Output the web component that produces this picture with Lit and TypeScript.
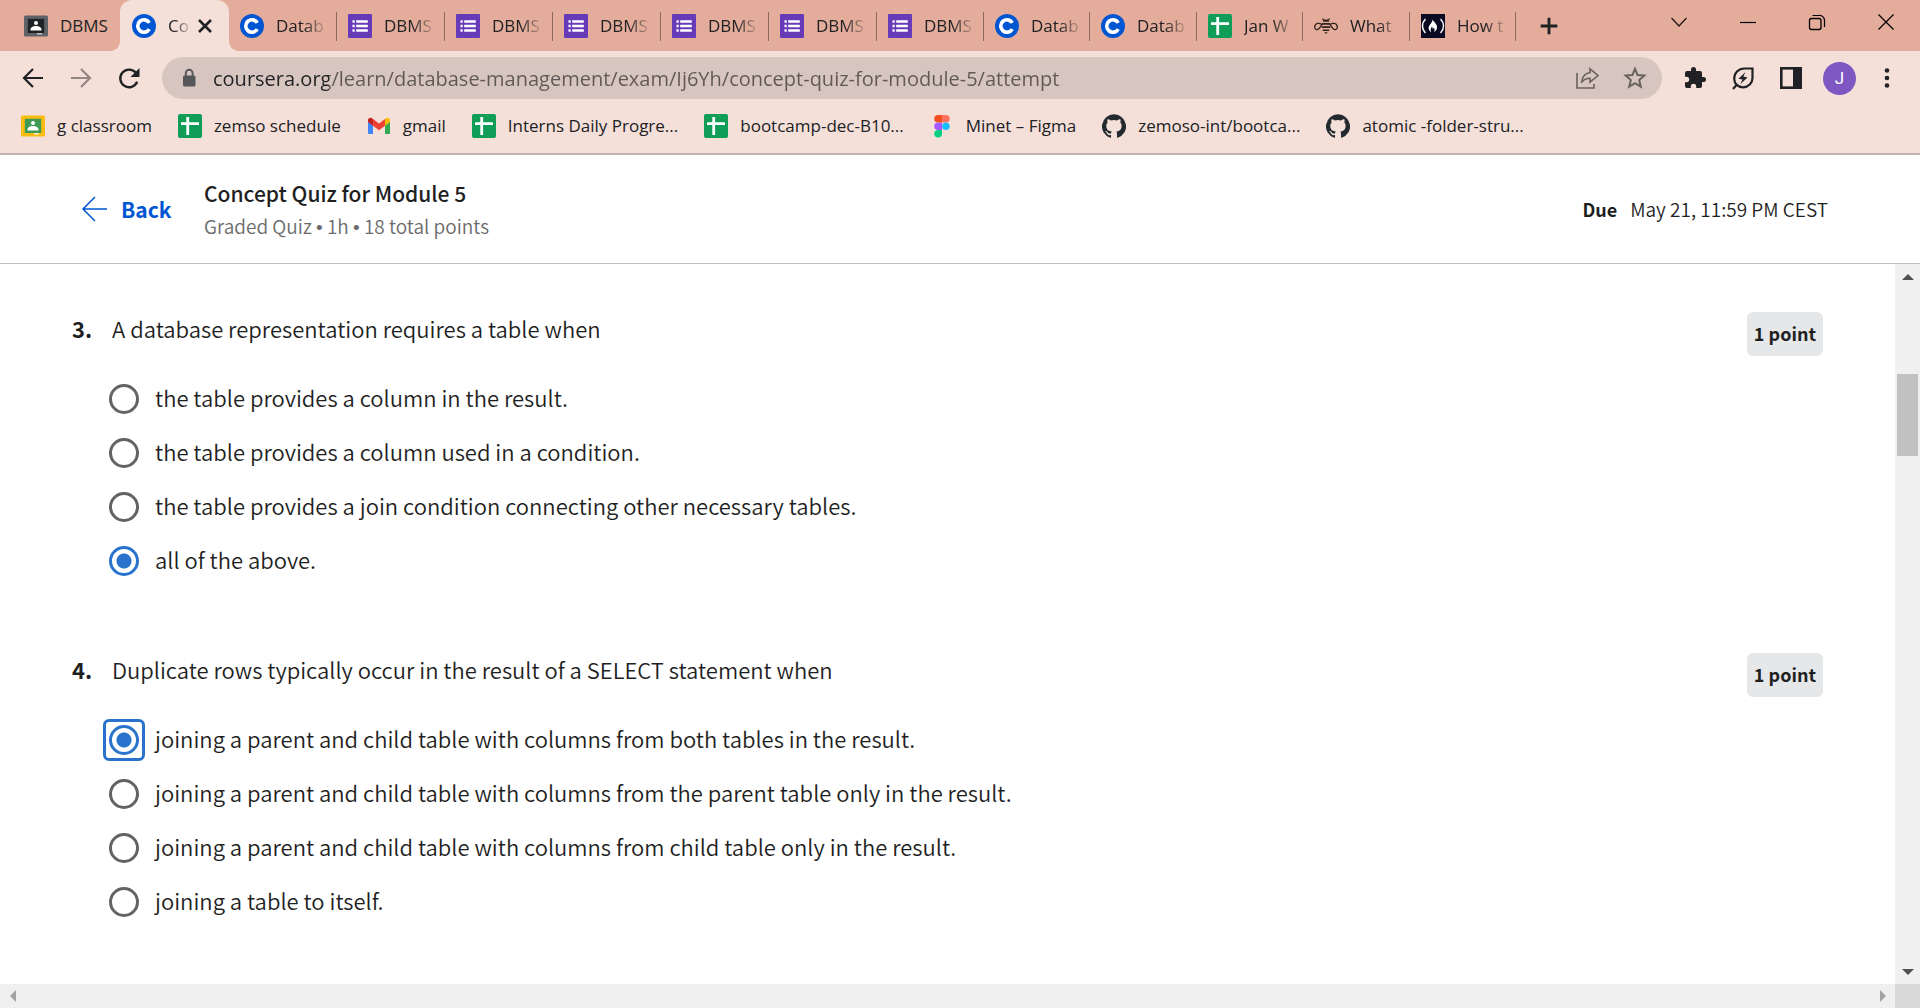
import { LitElement, html, css, svg, nothing, TemplateResult } from "lit";
import { customElement, property, state } from "lit/decorators.js";
import { classMap } from "lit/directives/class-map.js";

const shapes: Record<string, TemplateResult> = {
  classroomDark: svg`<rect y="1.500" width="24" height="21" rx="1.500" fill="#5f6368"/><rect x="3.800" y="4.800" width="16.400" height="14.200" fill="#202124"/><circle cx="12" cy="9" r="2" fill="#fff"/><path d="M6.500 15.500c0-2.400 2.600-3.600 5.500-3.600s5.500 1.200 5.500 3.600V16.500h-11z" fill="#fff"/><path d="M13 19h5v1.500h-5z" fill="#bdc1c6"/>`,
  classroom: svg`<rect y="1.500" width="24" height="21" rx="1.500" fill="#f9bd12"/><rect x="3.800" y="4.800" width="16.400" height="14.200" fill="#3f9a54"/><circle cx="12" cy="9" r="2" fill="#fff"/><path d="M6.500 15.500c0-2.400 2.600-3.600 5.500-3.600s5.500 1.200 5.500 3.600V16.500h-11z" fill="#fff"/><path d="M13 19h5v1.500h-5z" fill="#fff3c4"/>`,
  coursera: svg`<circle cx="12" cy="12" r="12" fill="#0056d2"/><path d="M17.300 8.900a6.200 6.200 0 1 0 0 6.200" fill="none" stroke="#fff" stroke-width="3.600"/>`,
  forms: svg`<rect width="24" height="24" rx="1" fill="#673ab7"/><path d="M4.500 6.200h2.200v2.600H4.500zM4.500 10.700h2.200v2.600H4.500zM4.500 15.200h2.200v2.600H4.500zM8.200 6.200h11.600v2.600H8.200zM8.200 10.700h11.600v2.600H8.200zM8.200 15.200h11.600v2.600H8.200z" fill="#fff"/>`,
  sheets: svg`<rect width="24" height="24" rx="2" fill="#0f9d58"/><path d="M8.300 3h2.800v5.300h9.900v2.800h-9.900V21H8.300v-9.900H3V8.300h5.300z" fill="#fff"/>`,
  bee: svg`<g fill="none" stroke="#33231f" stroke-width="1.300"><path d="M8 10.500C5 8.300 1.500 9.300.8 12c-.7 3 2.200 4.600 4 2.700C6.500 13 7 11.500 8 10.500zM16 10.500c3-2.200 6.500-1.200 7.200 1.500.7 3-2.200 4.600-4 2.700-1.700-1.700-2.200-3.200-3.200-4.200zM9.500 6l-1-1.500M14.500 6l1-1.500"/></g><path d="M9.500 5.500h5l.8 2.300H8.700zM8 9h8v1.800H8zM7.700 12.200h8.600V14H7.700zM8.700 15.400h6.600v1.700H8.700zM10.300 18.300h3.400L12 20z" fill="#33231f"/>`,
  fcc: svg`<rect width="24" height="24" fill="#0a0a23"/><g fill="none" stroke="#fff" stroke-width="1.400"><path d="M4.500 5c-4 4-4 10 0 14M19.500 5c4 4 4 10 0 14"/></g><path d="M11.500 5.500c1.200 2.500 5 4.500 4.500 8.300-.2 2-1.500 3.500-3 4.200 1-1.800.6-3.200-.3-4.400-.2 1-.7 1.300-1.200 1.300.1-1 0-1.700-.5-2.300-1.200 1.800-1.800 3.300-.7 5.400-2-.8-3-2.600-2.600-4.700.5-2.500 3.700-4.500 3.800-7.800z" fill="#fff"/>`,
  gmail: svg`<path d="M1 6v13c0 .6.500 1 1 1h4V11.500z" fill="#4285f4"/><path d="M18 20h4c.6 0 1-.4 1-1V6l-5 5.500z" fill="#34a853"/><path d="M18 5v6.700l5-3.700V6.200c0-2-2.200-3.100-3.800-2z" fill="#fbbc04"/><path d="M6 11.700V5l6 4.500L18 5v6.700l-6 4.500z" fill="#ea4335"/><path d="M1 6.200V8l5 3.700V5l-1.200-.8C3.200 3.100 1 4.200 1 6.200z" fill="#c5221f"/>`,
  figma: svg`<path d="M8 1h4v7.500H8A3.750 3.750 0 0 1 8 1z" fill="#f24e1e"/><path d="M12 1h4a3.750 3.750 0 0 1 0 7.500h-4z" fill="#ff7262"/><path d="M8 8.500h4V16H8a3.750 3.750 0 0 1 0-7.500z" fill="#a259ff"/><circle cx="15.900" cy="12.250" r="3.750" fill="#1abcfe"/><path d="M8 16h4v3.750A3.900 3.750 0 1 1 8 16z" fill="#0acf83"/>`,
  github: svg`<path fill="#24292f" d="M12 .3a12 12 0 0 0-3.800 23.400c.6.100.8-.3.800-.6v-2c-3.300.7-4-1.600-4-1.600-.6-1.400-1.400-1.800-1.400-1.800-1-.7.100-.7.100-.7 1.200 0 1.900 1.200 1.900 1.200 1 1.800 2.800 1.300 3.500 1 0-.8.400-1.300.7-1.600-2.700-.3-5.500-1.300-5.500-6 0-1.200.5-2.300 1.300-3.100-.2-.4-.6-1.600 0-3.200 0 0 1-.3 3.400 1.200a11.500 11.500 0 0 1 6 0c2.300-1.500 3.300-1.200 3.300-1.200.6 1.600.2 2.800 0 3.200.9.800 1.300 1.900 1.300 3.200 0 4.600-2.800 5.600-5.500 5.900.5.400.9 1 .9 2.200v3.300c0 .3.100.7.800.6A12 12 0 0 0 12 .3"/>`,
  closeTab: svg`<path d="M6 6l12 12M18 6l-12 12" stroke="#202124" stroke-width="2.600"/>`,
  plus: svg`<path d="M12 2v20M2 12h20" stroke="#202124" stroke-width="3.400"/>`,
  chevron: svg`<path d="M4.500 8l7.500 8 7.500-8" fill="none" stroke="#1b1513" stroke-width="1.200"/>`,
  minimise: svg`<path d="M4 12.500h16" stroke="#000" stroke-width="1.200"/>`,
  restore: svg`<path d="M7.500 5.500h6.500a5 5 0 0 1 5.500 5.500v6" fill="none" stroke="#000" stroke-width="1.200"/><rect x="4.500" y="8.500" width="11.500" height="11" rx="2" fill="none" stroke="#000" stroke-width="1.300"/>`,
  closeWindow: svg`<path d="M4.500 4.500l15 15M19.500 4.500l-15 15" stroke="#000" stroke-width="1.200"/>`,
  back: svg`<path d="M22 12H3.500M12 3l-9 9 9 9" fill="none" stroke="#202124" stroke-width="2.200"/>`,
  forward: svg`<path d="M2 12h18.500M12 3l9 9-9 9" fill="none" stroke="#948783" stroke-width="2.200"/>`,
  reload: svg`<path d="M20.200 15.800a8.800 8.800 0 1 1-1.300-9" fill="none" stroke="#202124" stroke-width="2.400"/><path d="M22.500 2v9h-9z" fill="#202124"/>`,
  lock: svg`<rect x="6" y="9.500" width="12.500" height="11" rx="1.500" fill="#54565a"/><path d="M8.800 10V7.200a3.400 3.400 0 0 1 6.800 0V10" fill="none" stroke="#54565a" stroke-width="1.900"/>`,
  share: svg`<path d="M2 7v15h17v-4" fill="none" stroke="#69625f" stroke-width="1.600"/><path d="M15 2.800l8 6.700-8 6.500v-3.800c-4 0-6.500 1.300-8.500 4.500.5-5.500 3.500-9.300 8.500-10.200z" fill="none" stroke="#69625f" stroke-width="1.600"/>`,
  star: svg`<path d="M12 2.800l2.600 6.300 6.700.5-5.100 4.400 1.600 6.700L12 17.100l-5.800 3.600L7.800 14 2.700 9.600l6.700-.5z" fill="none" stroke="#69625f" stroke-width="2"/>`,
  puzzle: svg`<path d="M20.500 11H19V7a2 2 0 0 0-2-2h-4V3.500a2.500 2.500 0 0 0-5 0V5H4a2 2 0 0 0-2 2v3.800h1.500a2.700 2.700 0 0 1 0 5.400H2V20a2 2 0 0 0 2 2h3.800v-1.500a2.700 2.700 0 0 1 5.400 0V22H17a2 2 0 0 0 2-2v-4h1.500a2.500 2.500 0 0 0 0-5z" fill="#202124"/>`,
  leaf: svg`<path d="M21.500 2.500V12a9.300 9.300 0 0 1-9.300 9.300c-5.200 0-9-3.700-9-8.600 0-5.600 4-10.200 10.300-10.200z" fill="none" stroke="#202124" stroke-width="2.200"/><path d="M2 23l4-4.500" stroke="#202124" stroke-width="2.200"/><path d="M14.500 6L7.500 12.700l4 .8-2.300 4.700 7.300-6.800-4.200-.8z" fill="#202124"/>`,
  panel: svg`<rect x="2.300" y="2.300" width="19.400" height="19.400" fill="none" stroke="#202124" stroke-width="2.600"/><path d="M14 2h8v20h-8z" fill="#202124"/>`,
  dots: svg`<circle cx="12" cy="4.500" r="2.300" fill="#202124"/><circle cx="12" cy="12" r="2.300" fill="#202124"/><circle cx="12" cy="19.500" r="2.300" fill="#202124"/>`,
  longArrow: svg`<path d="M25 12H1M13 0L1 12l12 12" fill="none" stroke="#0056d2" stroke-width="1.500"/>`,
};

const icon = (name: string) =>
  html`<svg class="icon" viewBox="0 0 24 24" aria-hidden="true">${shapes[name]}</svg>`;

const iconStyles = css`
  * { box-sizing: border-box; }
  .icon { display: block; width: 24px; height: 24px; flex: none; }
  button {
    border: 0; padding: 0; margin: 0; background: none; color: inherit;
    font: inherit; display: flex; align-items: center; justify-content: center;
  }
`;

interface Tab { icon: string; title: string; active?: boolean }

@customElement("browser-tabs")
class BrowserTabs extends LitElement {
  static styles = [iconStyles, css`
    :host { display: block; background: #e4ac9a; color: #202124; }
    .strip { display: flex; height: 51px; padding-left: 12px; }
    .tabs { display: flex; min-width: 0; }
    .tab {
      position: relative; display: flex; align-items: center; gap: 12px;
      width: 108px; padding: 0 4px 0 12px;
    }
    .tab:nth-child(n + 9) { width: 107px; }
    .tab:nth-child(2n + 10) { width: 106px; }
    .tab.split::after {
      content: ""; position: absolute; right: -1px; top: 12px; width: 1px; height: 29px;
      background: #8d6a5f;
    }
    .title {
      flex: 1; min-width: 0; white-space: nowrap; text-align: left;
      font-size: 17px; line-height: 24px;
      mask-image: linear-gradient(to right, #000 28px, transparent 52px);
    }
    .tab:first-child .title { mask-image: none; }
    .tab.active {
      background: #f5e0d9; border-radius: 12px 12px 0 0; width: 109px; margin-right: -1px;
      padding-right: 12px;
    }
    .tab.active::before, .tab.active::after {
      content: ""; position: absolute; bottom: 0; width: 10px; height: 10px;
    }
    .tab.active::before { left: -10px; background: radial-gradient(circle at 0 0, transparent 10px, #f5e0d9 10px); }
    .tab.active::after { right: -10px; background: radial-gradient(circle at 100% 0, transparent 10px, #f5e0d9 10px); }
    .tab.active .title { mask-image: linear-gradient(to right, #000 6px, transparent 24px); }
    .tab.active .close { margin-left: -12px; }
    .new { width: 68px; }
    .new .icon { width: 20px; height: 20px; }
    .window { display: flex; margin-left: auto; height: 44px; }
    .window button { width: 69px; }
  `];

  private tabs: Tab[] = [
    { icon: "classroomDark", title: "DBMS" },
    { icon: "coursera", title: "Co", active: true },
    { icon: "coursera", title: "Datab" },
    ...Array.from({ length: 6 }, () => ({ icon: "forms", title: "DBMS" })),
    { icon: "coursera", title: "Datab" },
    { icon: "coursera", title: "Datab" },
    { icon: "sheets", title: "Jan W" },
    { icon: "bee", title: "What" },
    { icon: "fcc", title: "How t" },
  ];

  render() {
    return html`
      <div class="strip">
        <div class="tabs" role="tablist">
          ${this.tabs.map((t, i) => html`
            <div class=${classMap({ tab: true, active: !!t.active, split: i > 1 })} role="tab" aria-selected=${!!t.active}>
              ${icon(t.icon)}<span class="title">${t.title}</span>
              ${t.active ? html`<button class="close" aria-label="Close tab">${icon("closeTab")}</button>` : nothing}
            </div>`)}
        </div>
        <button class="new" aria-label="New tab">${icon("plus")}</button>
        <div class="window">
          <button aria-label="Search tabs">${icon("chevron")}</button>
          <button aria-label="Minimise">${icon("minimise")}</button>
          <button aria-label="Restore">${icon("restore")}</button>
          <button aria-label="Close">${icon("closeWindow")}</button>
        </div>
      </div>`;
  }
}

@customElement("browser-toolbar")
class BrowserToolbar extends LitElement {
  static styles = [iconStyles, css`
    :host { display: block; background: #f5e0d9; color: #202124; border-bottom: 2px solid #c6b3ad; }
    .bar { display: flex; align-items: center; height: 54px; padding: 0 21px; }
    .nav { display: flex; gap: 24px; margin-right: 21px; }
    .omnibox {
      flex: 1; display: flex; align-items: center; height: 42px; border-radius: 21px;
      background: #d7c6bf; padding: 0 15px;
    }
    .url {
      flex: 1; min-width: 0; border: 0; padding: 0; margin: 0 16px 0 12px; outline: none;
      font: inherit; font-size: 20px; height: 32px;
      -webkit-text-fill-color: transparent;
      background: linear-gradient(to right, #202124 116px, #5f5856 116px);
      background-clip: text; -webkit-background-clip: text;
    }
    .site { display: flex; gap: 24px; }
    .actions { display: flex; align-items: center; gap: 24px; margin-left: 21px; }
    .avatar {
      width: 33px; height: 33px; border-radius: 50%; background: #7e57c2; color: #fff;
      font-family: Roboto, sans-serif; font-size: 17px; line-height: 33px; margin: 0 -5px 0 -4px;
    }
    .marks { display: flex; align-items: center; height: 48px; padding: 0 21px 6px; gap: 26px; }
    .mark {
      display: flex; align-items: center; gap: 12px; color: inherit; text-decoration: none;
      font-size: 17px; line-height: 24px; white-space: nowrap;
    }
  `];

  private marks = [
    ["classroom", "g classroom"], ["sheets", "zemso schedule"], ["gmail", "gmail"],
    ["sheets", "Interns Daily Progre..."], ["sheets", "bootcamp-dec-B10..."],
    ["figma", "Minet – Figma"], ["github", "zemoso-int/bootca..."], ["github", "atomic -folder-stru..."],
  ];

  render() {
    return html`
      <div class="bar">
        <div class="nav">
          <button aria-label="Back">${icon("back")}</button>
          <button aria-label="Forward">${icon("forward")}</button>
          <button aria-label="Reload">${icon("reload")}</button>
        </div>
        <div class="omnibox">
          <button aria-label="Site information">${icon("lock")}</button>
          <input class="url" type="text" aria-label="Address" .value=${"coursera.org/learn/database-management/exam/Ij6Yh/concept-quiz-for-module-5/attempt"}>
          <div class="site">
            <button aria-label="Share">${icon("share")}</button>
            <button aria-label="Bookmark">${icon("star")}</button>
          </div>
        </div>
        <div class="actions">
          <button aria-label="Extensions">${icon("puzzle")}</button>
          <button aria-label="Energy saver">${icon("leaf")}</button>
          <button aria-label="Side panel">${icon("panel")}</button>
          <button class="avatar" aria-label="Profile J">J</button>
          <button aria-label="Menu">${icon("dots")}</button>
        </div>
      </div>
      <nav class="marks">
        ${this.marks.map(([i, t]) => html`<a class="mark" href="#">${icon(i)}<span>${t}</span></a>`)}
      </nav>`;
  }
}

interface Question { number: number; prompt: string; options: string[]; selected: number; focused?: number }

@customElement("quiz-question")
class QuizQuestion extends LitElement {
  @property({ attribute: false }) question!: Question;
  @state() private picked = -1;

  static styles = css`
    * { box-sizing: border-box; }
    :host { display: block; }
    .question { display: flex; flex-direction: column; gap: 16px; }
    .head { display: flex; align-items: flex-start; min-height: 44px; font-size: 22px; line-height: 32px; }
    .number { width: 40px; font-weight: 700; }
    .prompt { flex: 1; }
    .points {
      background: #e5e7e8; border-radius: 6px; padding: 0 7px 2px; line-height: 42px;
      font-size: 18px; font-weight: 700;
    }
    .options { display: flex; flex-direction: column; padding-left: 31px; }
    .option { display: flex; align-items: center; gap: 10px; height: 54px; font-size: 22px; line-height: 32px; }
    .text { padding-bottom: 4px; }
    .ring { display: flex; padding: 3px; border: 3px solid transparent; border-radius: 6px; }
    .ring.focused { border-color: #2a73cc; }
    .radio {
      appearance: none; margin: 0; width: 30px; height: 30px; border: 3px solid #636363;
      border-radius: 50%; outline: none;
    }
    .radio:checked { border-color: #2a73cc; background: radial-gradient(circle, #2a73cc 7px, transparent 8px); }
  `;

  render() {
    const q = this.question;
    const current = this.picked < 0 ? q.selected : this.picked;
    return html`
      <div class="question" role="radiogroup" aria-labelledby="prompt">
        <div class="head">
          <span class="number">${q.number}.</span>
          <span class="prompt" id="prompt">${q.prompt}</span>
          <span class="points">1 point</span>
        </div>
        <div class="options">
          ${q.options.map((o, i) => html`
            <label class="option">
              <span class=${classMap({ ring: true, focused: q.focused === i })}>
                <input class="radio" type="radio" name="answer" .checked=${current === i} @change=${() => (this.picked = i)}>
              </span>
              <span class="text">${o}</span>
            </label>`)}
        </div>
      </div>`;
  }
}

@customElement("app-root")
class AppRoot extends LitElement {
  static styles = css`
    * { box-sizing: border-box; }
    :host {
      display: flex; flex-direction: column; height: 100vh; overflow: hidden; background: #fff;
      font-family: "Open Sans", "Noto Sans", sans-serif;
    }
    .page {
      flex: 1; min-height: 0; display: flex; flex-direction: column; color: #1f1f1f;
      font-family: "Noto Sans CJK SC", "Noto Sans", sans-serif; font-weight: 350;
    }
    .header {
      display: flex; align-items: center; height: 109px; padding: 0 92px 0 82px;
      border-bottom: 1px solid #bdbdbd;
    }
    .back {
      display: flex; align-items: center; gap: 13px; width: 122px; color: #0056d2;
      font-size: 21px; line-height: 32px; font-weight: 700; text-decoration: none;
    }
    .arrow { width: 26px; height: 24px; overflow: visible; }
    .heading { flex: 1; padding-top: 4px; }
    .title { margin: 0; font-size: 21px; line-height: 32px; font-weight: 500; }
    .meta { margin: 0; font-size: 19px; line-height: 34px; color: #6b6b6b; }
    .dot { font-family: "Liberation Sans", sans-serif; }
    .due { display: flex; gap: 13px; font-size: 19px; line-height: 32px; }
    .due strong { font-size: 18px; font-weight: 700; }
    .view { flex: 1; min-height: 0; display: grid; grid-template-columns: 1fr 25px; grid-template-rows: 1fr 24px; }
    .questions { display: flex; flex-direction: column; gap: 65px; padding: 48px 72px 0; min-height: 0; overflow: hidden; }
    .vertical, .horizontal { display: flex; background: #f0f0f0; }
    .vertical { flex-direction: column; }
    .horizontal { justify-content: space-between; }
    .step { display: flex; align-items: center; justify-content: center; width: 25px; height: 25px; }
    .horizontal .step { height: 24px; }
    .step svg { width: 12px; height: 12px; fill: #505050; }
    .horizontal .step svg { fill: #a3a3a3; }
    .before { flex: 85; }
    .thumb { flex: 82; margin: 0 2px; background: #c1c1c1; }
    .after { flex: 503; }
    .corner { background: #dadada; }
  `;

  private questions: Question[] = [
    {
      number: 3, prompt: "A database representation requires a table when", selected: 3,
      options: [
        "the table provides a column in the result.",
        "the table provides a column used in a condition.",
        "the table provides a join condition connecting other necessary tables.",
        "all of the above.",
      ],
    },
    {
      number: 4, prompt: "Duplicate rows typically occur in the result of a SELECT statement when", selected: 0, focused: 0,
      options: [
        "joining a parent and child table with columns from both tables in the result.",
        "joining a parent and child table with columns from the parent table only in the result.",
        "joining a parent and child table with columns from child table only in the result.",
        "joining a table to itself.",
      ],
    },
  ];

  private step(points: string) {
    return html`<span class="step"><svg viewBox="0 0 12 12" aria-hidden="true"><polygon points=${points}></polygon></svg></span>`;
  }

  render() {
    return html`
      <browser-tabs></browser-tabs>
      <browser-toolbar></browser-toolbar>
      <main class="page">
        <header class="header">
          <a class="back" href="#">
            <svg class="arrow" viewBox="0 0 26 24" aria-hidden="true">${shapes.longArrow}</svg>Back
          </a>
          <div class="heading">
            <h1 class="title">Concept Quiz for Module 5</h1>
            <p class="meta">Graded Quiz <span class="dot">•</span> 1h <span class="dot">•</span> 18 total points</p>
          </div>
          <div class="due"><strong>Due</strong><span>May 21, 11:59 PM CEST</span></div>
        </header>
        <div class="view">
          <div class="questions">
            ${this.questions.map((q) => html`<quiz-question .question=${q}></quiz-question>`)}
          </div>
          <div class="vertical">
            ${this.step("0,9 6,3 12,9")}
            <div class="before"></div><div class="thumb"></div><div class="after"></div>
            ${this.step("0,3 6,9 12,3")}
          </div>
          <div class="horizontal">${this.step("9,0 3,6 9,12")}${this.step("3,0 9,6 3,12")}</div>
          <div class="corner"></div>
        </div>
      </main>`;
  }
}
